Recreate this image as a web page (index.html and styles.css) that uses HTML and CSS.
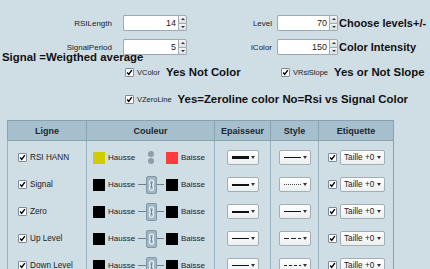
FILE: index.html
```html
<!DOCTYPE html>
<html lang="en">
<head>
    <meta charset="UTF-8">
    <meta name="viewport" content="width=device-width, initial-scale=1.0">
    <title>RSI HANN settings</title>
    <link rel="stylesheet" href="styles.css">
</head>
<body>
    <div class="params">
        <div class="param-row">
            <div class="field">
                <span class="field-label">RSILength</span>
                <span class="spin-input"><span class="value">14</span><span class="spin"><i class="up"></i><i class="down"></i></span></span>
            </div>
            <div class="field field-right">
                <span class="field-label">Level</span>
                <span class="spin-input small"><span class="value">70</span><span class="spin"><i class="up"></i><i class="down"></i></span></span>
                <span class="note">Choose levels+/-</span>
            </div>
        </div>
        <div class="param-row">
            <div class="field">
                <span class="field-label">SignalPeriod</span>
                <span class="spin-input"><span class="value">5</span><span class="spin"><i class="up"></i><i class="down"></i></span></span>
            </div>
            <div class="field field-right">
                <span class="field-label">lColor</span>
                <span class="spin-input small"><span class="value">150</span><span class="spin"><i class="up"></i><i class="down"></i></span></span>
                <span class="note">Color Intensity</span>
            </div>
        </div>
        <div class="note note-signal">Signal =Weigthed average</div>
        <div class="check-row">
            <div class="check-field wide">
                <span class="check"><svg viewBox="0 0 9 9"><path d="M1.5 4.5 L3.5 7 L7.5 1.5" /></svg></span>
                <span class="check-label">VColor</span>
                <span class="note">Yes Not Color</span>
            </div>
            <div class="check-field">
                <span class="check"><svg viewBox="0 0 9 9"><path d="M1.5 4.5 L3.5 7 L7.5 1.5" /></svg></span>
                <span class="check-label">VRsiSlope</span>
                <span class="note">Yes or Not Slope</span>
            </div>
        </div>
        <div class="check-row row-zero">
            <div class="check-field">
                <span class="check"><svg viewBox="0 0 9 9"><path d="M1.5 4.5 L3.5 7 L7.5 1.5" /></svg></span>
                <span class="check-label">VZeroLine</span>
                <span class="note">Yes=Zeroline color No=Rsi vs Signal Color</span>
            </div>
        </div>
    </div>

    <table class="lines">
        <thead>
            <tr>
                <th class="col-line">Ligne</th>
                <th class="col-color">Couleur</th>
                <th class="col-width">Epaisseur</th>
                <th class="col-style">Style</th>
                <th class="col-label">Etiquette</th>
            </tr>
        </thead>
        <tbody>
            <tr>
                <td><div class="cell"><span class="check"><svg viewBox="0 0 9 9"><path d="M1.5 4.5 L3.5 7 L7.5 1.5" /></svg></span><span class="line-name">RSI HANN</span></div></td>
                <td><div class="cell">
                    <span class="swatch yellow"></span><span class="swatch-text">Hausse</span>
                    <span class="link"><span class="dots"><i></i><i></i></span></span>
                    <span class="swatch red"></span><span class="swatch-text">Baisse</span>
                </div></td>
                <td><div class="cell center"><span class="dd"><span class="sample w3"></span><i class="arrow"></i></span></div></td>
                <td><div class="cell center"><span class="dd"><span class="sample solid"></span><i class="arrow"></i></span></div></td>
                <td><div class="cell"><span class="check"><svg viewBox="0 0 9 9"><path d="M1.5 4.5 L3.5 7 L7.5 1.5" /></svg></span><span class="dd size">Taille +0<i class="arrow"></i></span></div></td>
            </tr>
            <tr>
                <td><div class="cell"><span class="check"><svg viewBox="0 0 9 9"><path d="M1.5 4.5 L3.5 7 L7.5 1.5" /></svg></span><span class="line-name">Signal</span></div></td>
                <td><div class="cell">
                    <span class="swatch"></span><span class="swatch-text">Hausse</span>
                    <span class="link chained"><span class="chain"><svg viewBox="0 0 11 18"><rect x="3" y="2.5" width="5" height="6.5" rx="2.5" /><rect x="3" y="9" width="5" height="6.5" rx="2.5" /><line x1="5.5" y1="6" x2="5.5" y2="12" /></svg></span></span>
                    <span class="swatch"></span><span class="swatch-text">Baisse</span>
                </div></td>
                <td><div class="cell center"><span class="dd"><span class="sample w2"></span><i class="arrow"></i></span></div></td>
                <td><div class="cell center"><span class="dd"><span class="sample dotted"></span><i class="arrow"></i></span></div></td>
                <td><div class="cell"><span class="check"><svg viewBox="0 0 9 9"><path d="M1.5 4.5 L3.5 7 L7.5 1.5" /></svg></span><span class="dd size">Taille +0<i class="arrow"></i></span></div></td>
            </tr>
            <tr>
                <td><div class="cell"><span class="check"><svg viewBox="0 0 9 9"><path d="M1.5 4.5 L3.5 7 L7.5 1.5" /></svg></span><span class="line-name">Zero</span></div></td>
                <td><div class="cell">
                    <span class="swatch"></span><span class="swatch-text">Hausse</span>
                    <span class="link chained"><span class="chain"><svg viewBox="0 0 11 18"><rect x="3" y="2.5" width="5" height="6.5" rx="2.5" /><rect x="3" y="9" width="5" height="6.5" rx="2.5" /><line x1="5.5" y1="6" x2="5.5" y2="12" /></svg></span></span>
                    <span class="swatch"></span><span class="swatch-text">Baisse</span>
                </div></td>
                <td><div class="cell center"><span class="dd"><span class="sample w2"></span><i class="arrow"></i></span></div></td>
                <td><div class="cell center"><span class="dd"><span class="sample solid"></span><i class="arrow"></i></span></div></td>
                <td><div class="cell"><span class="check"><svg viewBox="0 0 9 9"><path d="M1.5 4.5 L3.5 7 L7.5 1.5" /></svg></span><span class="dd size">Taille +0<i class="arrow"></i></span></div></td>
            </tr>
            <tr>
                <td><div class="cell"><span class="check"><svg viewBox="0 0 9 9"><path d="M1.5 4.5 L3.5 7 L7.5 1.5" /></svg></span><span class="line-name">Up Level</span></div></td>
                <td><div class="cell">
                    <span class="swatch"></span><span class="swatch-text">Hausse</span>
                    <span class="link chained"><span class="chain"><svg viewBox="0 0 11 18"><rect x="3" y="2.5" width="5" height="6.5" rx="2.5" /><rect x="3" y="9" width="5" height="6.5" rx="2.5" /><line x1="5.5" y1="6" x2="5.5" y2="12" /></svg></span></span>
                    <span class="swatch"></span><span class="swatch-text">Baisse</span>
                </div></td>
                <td><div class="cell center"><span class="dd"><span class="sample w1"></span><i class="arrow"></i></span></div></td>
                <td><div class="cell center"><span class="dd"><span class="sample dashed"></span><i class="arrow"></i></span></div></td>
                <td><div class="cell"><span class="check"><svg viewBox="0 0 9 9"><path d="M1.5 4.5 L3.5 7 L7.5 1.5" /></svg></span><span class="dd size">Taille +0<i class="arrow"></i></span></div></td>
            </tr>
            <tr>
                <td><div class="cell"><span class="check"><svg viewBox="0 0 9 9"><path d="M1.5 4.5 L3.5 7 L7.5 1.5" /></svg></span><span class="line-name">Down Level</span></div></td>
                <td><div class="cell">
                    <span class="swatch"></span><span class="swatch-text">Hausse</span>
                    <span class="link chained"><span class="chain"><svg viewBox="0 0 11 18"><rect x="3" y="2.5" width="5" height="6.5" rx="2.5" /><rect x="3" y="9" width="5" height="6.5" rx="2.5" /><line x1="5.5" y1="6" x2="5.5" y2="12" /></svg></span></span>
                    <span class="swatch"></span><span class="swatch-text">Baisse</span>
                </div></td>
                <td><div class="cell center"><span class="dd"><span class="sample w1"></span><i class="arrow"></i></span></div></td>
                <td><div class="cell center"><span class="dd"><span class="sample short-dash"></span><i class="arrow"></i></span></div></td>
                <td><div class="cell"><span class="check"><svg viewBox="0 0 9 9"><path d="M1.5 4.5 L3.5 7 L7.5 1.5" /></svg></span><span class="dd size">Taille +0<i class="arrow"></i></span></div></td>
            </tr>
        </tbody>
    </table>
</body>
</html>
```

FILE: styles.css
```css
body {
    margin: 0;
    background: #cfdde5;
    font-family: "Liberation Sans", Arial, sans-serif;
    color: #222;
    overflow: hidden;
}
.params {
    padding-top: 15px;
}
.param-row {
    display: flex;
    height: 16px;
    margin-bottom: 8px;
}
.field {
    display: flex;
    align-items: center;
}
.field-label {
    width: 112px;
    text-align: right;
    font-size: 8px;
    margin-right: 11px;
}
.field-right .field-label {
    width: 85px;
    margin-right: 5px;
}
.spin-input {
    display: flex;
    height: 16px;
    width: 64px;
}
.spin-input.small {
    width: 61px;
}
.spin-input .value {
    flex: 1;
    box-sizing: border-box;
    background: #fff;
    border: 1px solid #9eaab3;
    border-right: none;
    border-radius: 2px 0 0 2px;
    text-align: right;
    padding-right: 2px;
    font-size: 9px;
    line-height: 14px;
}
.spin {
    display: flex;
    flex-direction: column;
    width: 9px;
}
.spin i {
    flex: 1;
    box-sizing: border-box;
    border: 1px solid #a0acb4;
    background: linear-gradient(#f4f6f7, #d9dfe3);
    display: flex;
    align-items: center;
    justify-content: center;
}
.spin i.up {
    border-radius: 0 2px 0 0;
}
.spin i.down {
    border-top: none;
    border-radius: 0 0 2px 0;
}
.spin i::before {
    content: '';
    border-left: 2px solid transparent;
    border-right: 2px solid transparent;
}
.spin i.up::before {
    border-bottom: 2px solid #333;
}
.spin i.down::before {
    border-top: 2px solid #333;
}
.note {
    font-weight: bold;
    font-size: 11.4px;
    color: #111;
    white-space: nowrap;
}
.field-right .note {
    margin-left: 1px;
    font-size: 11px;
}
.note-signal {
    margin: -13px 0 0 2px;
    line-height: 14px;
}
.check-row {
    display: flex;
    align-items: center;
    height: 14px;
    margin-top: 1px;
    padding-left: 125px;
}
.check-row.row-zero {
    margin-top: 13px;
}
.check-field {
    display: flex;
    align-items: center;
}
.check-field.wide {
    width: 156px;
}
.check {
    display: inline-flex;
    box-sizing: border-box;
    width: 9px;
    height: 9px;
    background: #fff;
    border: 1px solid #7d8c96;
    border-radius: 1px;
    flex: 0 0 auto;
}
.check svg {
    width: 100%;
    height: 100%;
    fill: none;
    stroke: #000;
    stroke-width: 1.8;
}
.check-label {
    font-size: 7.5px;
    margin: 0 6px 0 3px;
}

/* table */
.lines {
    margin: 14px 0 0 7px;
    border-collapse: collapse;
    border: 1px solid #87a1b1;
    table-layout: fixed;
    width: 385px;
}
.lines th {
    background: #a5bfcc;
    height: 19px;
    padding: 0;
    font-size: 9px;
    font-weight: bold;
    color: #1d2730;
    border-left: 1px solid #8aa3b2;
    border-bottom: 1px solid #8aa3b2;
}
.col-line { width: 78px; }
.col-color { width: 127px; }
.col-width { width: 55px; }
.col-style { width: 47px; }
.col-label { width: 74px; }
.lines td {
    height: 27px;
    padding: 0;
    border-left: 1px solid #9ab1bf;
    vertical-align: middle;
}
.lines tbody tr:first-child td {
    padding-top: 3px;
}
.cell {
    display: flex;
    align-items: center;
    font-size: 8px;
}
.cell.center {
    justify-content: center;
}
.lines td:first-child .cell {
    padding-left: 10px;
}
.line-name {
    margin-left: 3px;
    font-size: 8.2px;
}
.lines td:nth-child(2) .cell {
    padding-left: 6px;
}
.swatch {
    width: 12px;
    height: 12px;
    background: #000;
    flex: 0 0 auto;
}
.swatch.yellow {
    background: #cfcc00;
}
.swatch.red {
    background: #ff3b3b;
}
.swatch-text {
    margin-left: 3px;
    width: 28px;
}
.link {
    width: 30px;
    display: flex;
    align-items: center;
    justify-content: center;
}
.link.chained {
    background: linear-gradient(#6f7f8a, #6f7f8a) no-repeat center / 26px 1px;
}
.dots {
    display: flex;
    flex-direction: column;
    gap: 1px;
}
.dots i {
    width: 6px;
    height: 6px;
    border-radius: 50%;
    background: #8d9ea9;
}
.chain {
    display: flex;
    box-sizing: border-box;
    width: 11px;
    height: 18px;
    background: #a1b6c3;
    border: 1px solid #8099a9;
    border-radius: 2px;
}
.chain svg {
    width: 100%;
    height: 100%;
    fill: none;
    stroke: #edf2f5;
    stroke-width: 1.3;
}
.chain svg line {
    stroke: #6a8090;
}
.dd {
    display: inline-flex;
    align-items: center;
    box-sizing: border-box;
    height: 15px;
    width: 32px;
    padding: 0 3px 0 4px;
    background: linear-gradient(#ffffff, #eceff1);
    border: 1px solid #a2adb4;
    border-radius: 2px;
}
.dd .arrow {
    margin-left: auto;
    border-left: 2.5px solid transparent;
    border-right: 2.5px solid transparent;
    border-top: 3px solid #333;
}
.sample {
    width: 17px;
    height: 0;
    border-top: 1px solid #111;
}
.sample.w3 { border-top-width: 3px; }
.sample.w2 { border-top-width: 2px; }
.sample.dotted {
    border-top: 1px dotted #444;
}
.sample.dashed {
    border: none;
    height: 1px;
    background: repeating-linear-gradient(90deg, #222 0 5px, transparent 5px 7px);
}
.sample.short-dash {
    border: none;
    height: 1px;
    background: repeating-linear-gradient(90deg, #222 0 3px, transparent 3px 5px);
}
.lines td:last-child .cell {
    padding-left: 9px;
}
.dd.size {
    width: 45px;
    margin-left: 3px;
    padding-left: 3px;
    font-size: 8.2px;
    color: #222;
}
```
